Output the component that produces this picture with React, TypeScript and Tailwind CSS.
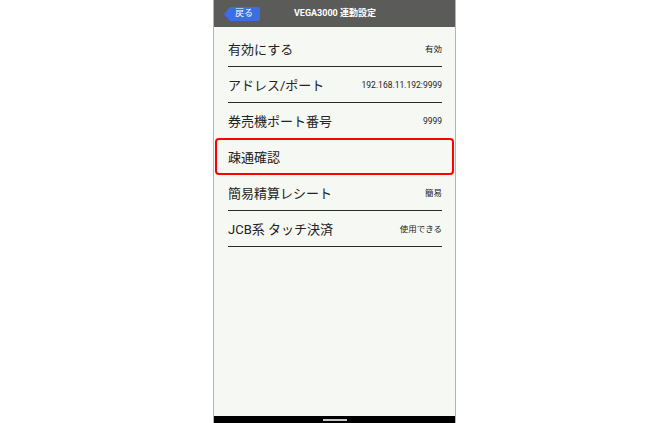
import React from "react";

const rows: { label: string; value: string }[] = [
  { label: "有効にする", value: "有効" },
  { label: "アドレス/ポート", value: "192.168.11.192:9999" },
  { label: "券売機ポート番号", value: "9999" },
];

const rows2: { label: string; value: string }[] = [
  { label: "簡易精算レシート", value: "簡易" },
  { label: "JCB系 タッチ決済", value: "使用できる" },
];

function Row({ label, value }: { label: string; value: string }) {
  return (
    <div className="mx-[14px] mr-[13px] h-[36px] flex items-center justify-between border-b border-[#2a2a2a]">
      <span className="text-[13px] text-[#222] leading-none pt-[2px]">{label}</span>
      <span className="text-[8.5px] text-[#222] leading-none pt-[2px]">{value}</span>
    </div>
  );
}

export default function App() {
  return (
    <div
      className="w-[670px] h-[423px] bg-white flex"
      style={{ fontFamily: "Roboto, 'Noto Sans CJK JP', sans-serif" }}
    >
      <div className="ml-[213px] w-[243px] h-[423px] flex flex-col border-x border-[#b4b4b4] bg-[#f6f8f4]">
        <div className="h-[27px] bg-[#5b5c59] grid grid-cols-[1fr_auto_1fr] items-center">
          <div className="flex items-center pl-[10px]">
            <div className="w-0 h-0 border-y-[7px] border-y-transparent border-r-[6px] border-r-[#3b6ee0]" />
            <div className="h-[14px] bg-[#3b6ee0] rounded-r-[2px] pl-[5px] pr-[7px] flex items-center text-white text-[9px] leading-none">
              戻る
            </div>
          </div>
          <div className="text-white text-[9px] font-bold leading-none pl-[1px]">VEGA3000 連動設定</div>
          <div />
        </div>
        <div className="flex-1 pt-[4px]">
          {rows.map((r) => (
            <Row key={r.label} {...r} />
          ))}
          <div className="mx-[1px] -mt-[1px] h-[37px] border-2 border-[#ff0000] rounded-[4px] flex items-center pl-[11px]">
            <span className="text-[13px] text-[#222] leading-none pt-[2px]">疎通確認</span>
          </div>
          {rows2.map((r) => (
            <Row key={r.label} {...r} />
          ))}
        </div>
        <div className="h-[7px] bg-black flex items-center justify-center">
          <div className="w-[24px] h-[2px] bg-[#c8c8c8]" />
        </div>
      </div>
    </div>
  );
}
